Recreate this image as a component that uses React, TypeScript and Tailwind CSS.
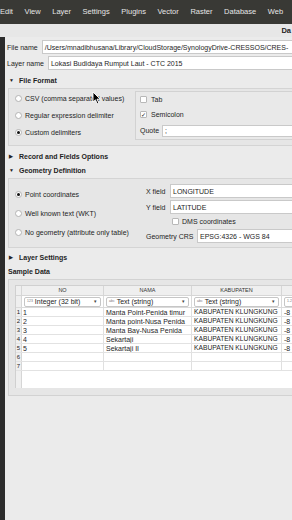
import React from 'react';

const menus = ['Edit', 'View', 'Layer', 'Settings', 'Plugins', 'Vector', 'Raster', 'Database', 'Web'];

const rows = [
  { no: '1', nama: 'Manta Point-Penida timur', kab: 'KABUPATEN KLUNGKUNG' },
  { no: '2', nama: 'Manta point-Nusa Penida', kab: 'KABUPATEN KLUNGKUNG' },
  { no: '3', nama: 'Manta Bay-Nusa Penida', kab: 'KABUPATEN KLUNGKUNG' },
  { no: '4', nama: 'Sekartaji', kab: 'KABUPATEN KLUNGKUNG' },
  { no: '5', nama: 'Sekartaji II', kab: 'KABUPATEN KLUNGKUNG' },
  { no: '', nama: '', kab: '' },
  { no: '', nama: '', kab: '' },
];

const Radio = ({ checked = false }: { checked?: boolean }) => (
  <span className="w-[7px] h-[7px] shrink-0 rounded-full bg-white border border-[#b4b4b4] flex items-center justify-center">
    {checked && <span className="w-[3px] h-[3px] rounded-full bg-[#111]" />}
  </span>
);

const Check = ({ checked = false }: { checked?: boolean }) => (
  <span className="w-[7px] h-[7px] shrink-0 rounded-[1px] bg-white border border-[#b8b8b8] flex items-center justify-center text-[6px] leading-none text-[#111]">
    {checked ? '✓' : ''}
  </span>
);

const Field = ({ value, className = '' }: { value: string; className?: string }) => (
  <div className={`h-[14px] flex-1 bg-white border border-[#c9c9c9] flex items-center pl-[2px] whitespace-nowrap overflow-hidden ${className}`}>
    {value}
  </div>
);

const Section = ({ open, title }: { open: boolean; title: string }) => (
  <div className="h-[14px] flex items-center pl-[4px] font-bold">
    <span className="w-[10px] text-[5px] text-[#222]">{open ? '▼' : '▶'}</span>
    <span>{title}</span>
  </div>
);

const TypeCombo = ({ tag, label, w }: { tag: string; label: string; w: string }) => (
  <div className={`${w} shrink-0 h-full border-r border-[#dadada] flex items-center px-[2px]`}>
    <div className="flex-1 h-[10px] bg-white border border-[#c6c6c6] rounded-[2px] flex items-center pl-[2px] pr-[3px] whitespace-nowrap overflow-hidden">
      <span className="text-[3.5px] text-[#777] mr-[2px]">{tag}</span>
      <span className="flex-1">{label}</span>
      <span className="text-[5px] text-[#444]">▾</span>
    </div>
  </div>
);

export default function App() {
  return (
    <div className="relative w-[292px] h-[520px] overflow-hidden bg-[#ebebeb] text-[#1e1e1e] font-['Liberation_Sans',Arial,sans-serif] text-[7px] leading-none flex flex-col">
      {/* menu bar */}
      <div className="h-[24px] shrink-0 bg-[#393935] flex items-center gap-[11.6px] text-[7.5px] text-[#e6e6e6] whitespace-nowrap">
        {menus.map((m) => (
          <span key={m}>{m}</span>
        ))}
      </div>

      {/* dialog title */}
      <div className="h-[13px] shrink-0 flex items-center justify-end bg-[#e7e7e7] whitespace-nowrap">
        <span className="font-bold text-[7.5px] mr-[1px]">Da</span>
      </div>

      <div className="flex flex-1 min-h-0">
        <div className="w-[5px] shrink-0 bg-[#2c2c2c]" />
        <div className="flex-1 min-w-0 flex flex-col">
          {/* file name / layer name */}
          <div className="mt-[3px] h-[14px] flex items-center gap-[4px] pl-[2px] whitespace-nowrap">
            <span>File name</span>
            <Field value="/Users/mnadibhusana/Library/CloudStorage/SynologyDrive-CRESSOS/CRES-" className="-mr-[20px]" />
          </div>
          <div className="mt-[2px] h-[14px] flex items-center gap-[4px] pl-[2px] whitespace-nowrap">
            <span>Layer name</span>
            <Field value="Lokasi Budidaya Rumput Laut - CTC 2015" className="-mr-[20px]" />
          </div>

          <div className="mt-[3px]">
            <Section open title="File Format" />
          </div>

          {/* file format group */}
          <div className="mt-[1px] ml-[3px] -mr-[10px] h-[58px] border border-[#d4d4d4] bg-[#e6e6e6] flex">
            <div className="w-[126px] shrink-0 pt-[1px] pl-[6px] flex flex-col">
              <div className="h-[17px] flex items-center gap-[3px] whitespace-nowrap"><Radio />CSV (comma separated values)</div>
              <div className="h-[17px] flex items-center gap-[3px] whitespace-nowrap"><Radio />Regular expression delimiter</div>
              <div className="h-[17px] flex items-center gap-[3px] whitespace-nowrap"><Radio checked />Custom delimiters</div>
            </div>
            <div className="flex-1 mt-[2px] h-[49px] border border-[#d2d2d2] bg-[#e9e9e9] pl-[4px] flex flex-col">
              <div className="h-[15px] flex items-center gap-[4px]"><Check />Tab</div>
              <div className="h-[15px] flex items-center gap-[4px]"><Check checked />Semicolon</div>
              <div className="h-[17px] flex items-center gap-[3px]">
                <span>Quote</span>
                <div className="flex-1 h-[12px] bg-white border border-[#c9c9c9] flex items-center pl-[2px]">;</div>
              </div>
            </div>
          </div>

          <div className="mt-[3px]">
            <Section open={false} title="Record and Fields Options" />
          </div>
          <Section open title="Geometry Definition" />

          {/* geometry group */}
          <div className="mt-[1px] ml-[3px] -mr-[10px] h-[70px] border border-[#d4d4d4] bg-[#e6e6e6] flex">
            <div className="w-[137px] shrink-0 pt-[6px] pl-[6px] flex flex-col">
              <div className="h-[19px] flex items-center gap-[3px] whitespace-nowrap"><Radio checked />Point coordinates</div>
              <div className="h-[19px] flex items-center gap-[3px] whitespace-nowrap"><Radio />Well known text (WKT)</div>
              <div className="h-[19px] flex items-center gap-[3px] whitespace-nowrap"><Radio />No geometry (attribute only table)</div>
            </div>
            <div className="flex-1 pt-[5px] flex flex-col whitespace-nowrap">
              <div className="h-[14px] flex items-center">
                <span className="w-[24px] shrink-0">X field</span>
                <Field value="LONGITUDE" />
              </div>
              <div className="mt-[2px] h-[14px] flex items-center">
                <span className="w-[24px] shrink-0">Y field</span>
                <Field value="LATITUDE" />
              </div>
              <div className="h-[15px] flex items-center gap-[3px] pl-[26px]"><Check />DMS coordinates</div>
              <div className="h-[14px] flex items-center">
                <span className="w-[51px] shrink-0">Geometry CRS</span>
                <Field value="EPSG:4326 - WGS 84" />
              </div>
            </div>
          </div>

          <div className="mt-[2px]">
            <Section open={false} title="Layer Settings" />
          </div>
          <div className="h-[14px] flex items-center pl-[3px] font-bold">Sample Data</div>

          {/* sample data table */}
          <div className="mt-[1px] ml-[3px] -mr-[10px] h-[117px] border border-[#d2d2d2] bg-[#e6e6e6] pt-[5px] pl-[6px]">
            <div className="h-[103px] bg-white border-l border-t border-[#d0d0d0] flex flex-col overflow-hidden">
              <div className="h-[10px] shrink-0 flex bg-[#efefef] border-b border-[#d6d6d6] text-[5.5px] text-[#333]">
                <div className="w-[6px] shrink-0 border-r border-[#d6d6d6]" />
                <div className="w-[82px] shrink-0 border-r border-[#d6d6d6] flex items-center justify-center">NO</div>
                <div className="w-[88px] shrink-0 border-r border-[#d6d6d6] flex items-center justify-center">NAMA</div>
                <div className="w-[90px] shrink-0 border-r border-[#d6d6d6] flex items-center justify-center">KABUPATEN</div>
                <div className="w-[40px] shrink-0" />
              </div>
              <div className="h-[12px] shrink-0 flex border-b border-[#dadada]">
                <div className="w-[6px] shrink-0 bg-[#efefef] border-r border-[#d6d6d6]" />
                <TypeCombo tag="123" label="Integer (32 bit)" w="w-[82px]" />
                <TypeCombo tag="abc" label="Text (string)" w="w-[88px]" />
                <TypeCombo tag="abc" label="Text (string)" w="w-[90px]" />
                <div className="w-[40px] shrink-0 flex items-center pl-[2px]">
                  <div className="h-[10px] flex-1 bg-white border border-[#c6c6c6] rounded-[2px] flex items-center pl-[2px] text-[3.5px] text-[#777]">1.2</div>
                </div>
              </div>
              {rows.map((r, i) => (
                <div key={i} className="h-[9px] shrink-0 flex border-b border-[#e2e2e2] whitespace-nowrap">
                  <div className="w-[6px] shrink-0 bg-[#efefef] border-r border-[#d6d6d6] flex items-center justify-center text-[6px]">{i + 1}</div>
                  <div className="w-[82px] shrink-0 border-r border-[#e0e0e0] flex items-center pl-[1px]">{r.no}</div>
                  <div className="w-[88px] shrink-0 border-r border-[#e0e0e0] flex items-center pl-[2px] overflow-hidden">{r.nama}</div>
                  <div className="w-[90px] shrink-0 border-r border-[#e0e0e0] flex items-center pl-[2px] overflow-hidden text-[6.7px]">{r.kab}</div>
                  <div className="w-[40px] shrink-0 flex items-center pl-[2px]">{r.no ? '-8' : ''}</div>
                </div>
              ))}
              <div className="flex-1 flex">
                <div className="w-[6px] shrink-0 bg-[#efefef] border-r border-[#d6d6d6]" />
                <div className="flex-1" />
              </div>
            </div>
          </div>
        </div>
      </div>

      {/* mouse pointer */}
      <svg className="absolute left-[92px] top-[91px]" width="9" height="14" viewBox="0 0 9 14">
        <path d="M1 1 L1 11 L3.4 8.8 L5.2 12.8 L6.8 12.1 L5 8.2 L8.2 8.2 Z" fill="#000" stroke="#fff" strokeWidth="0.9" strokeLinejoin="round" />
      </svg>
    </div>
  );
}
